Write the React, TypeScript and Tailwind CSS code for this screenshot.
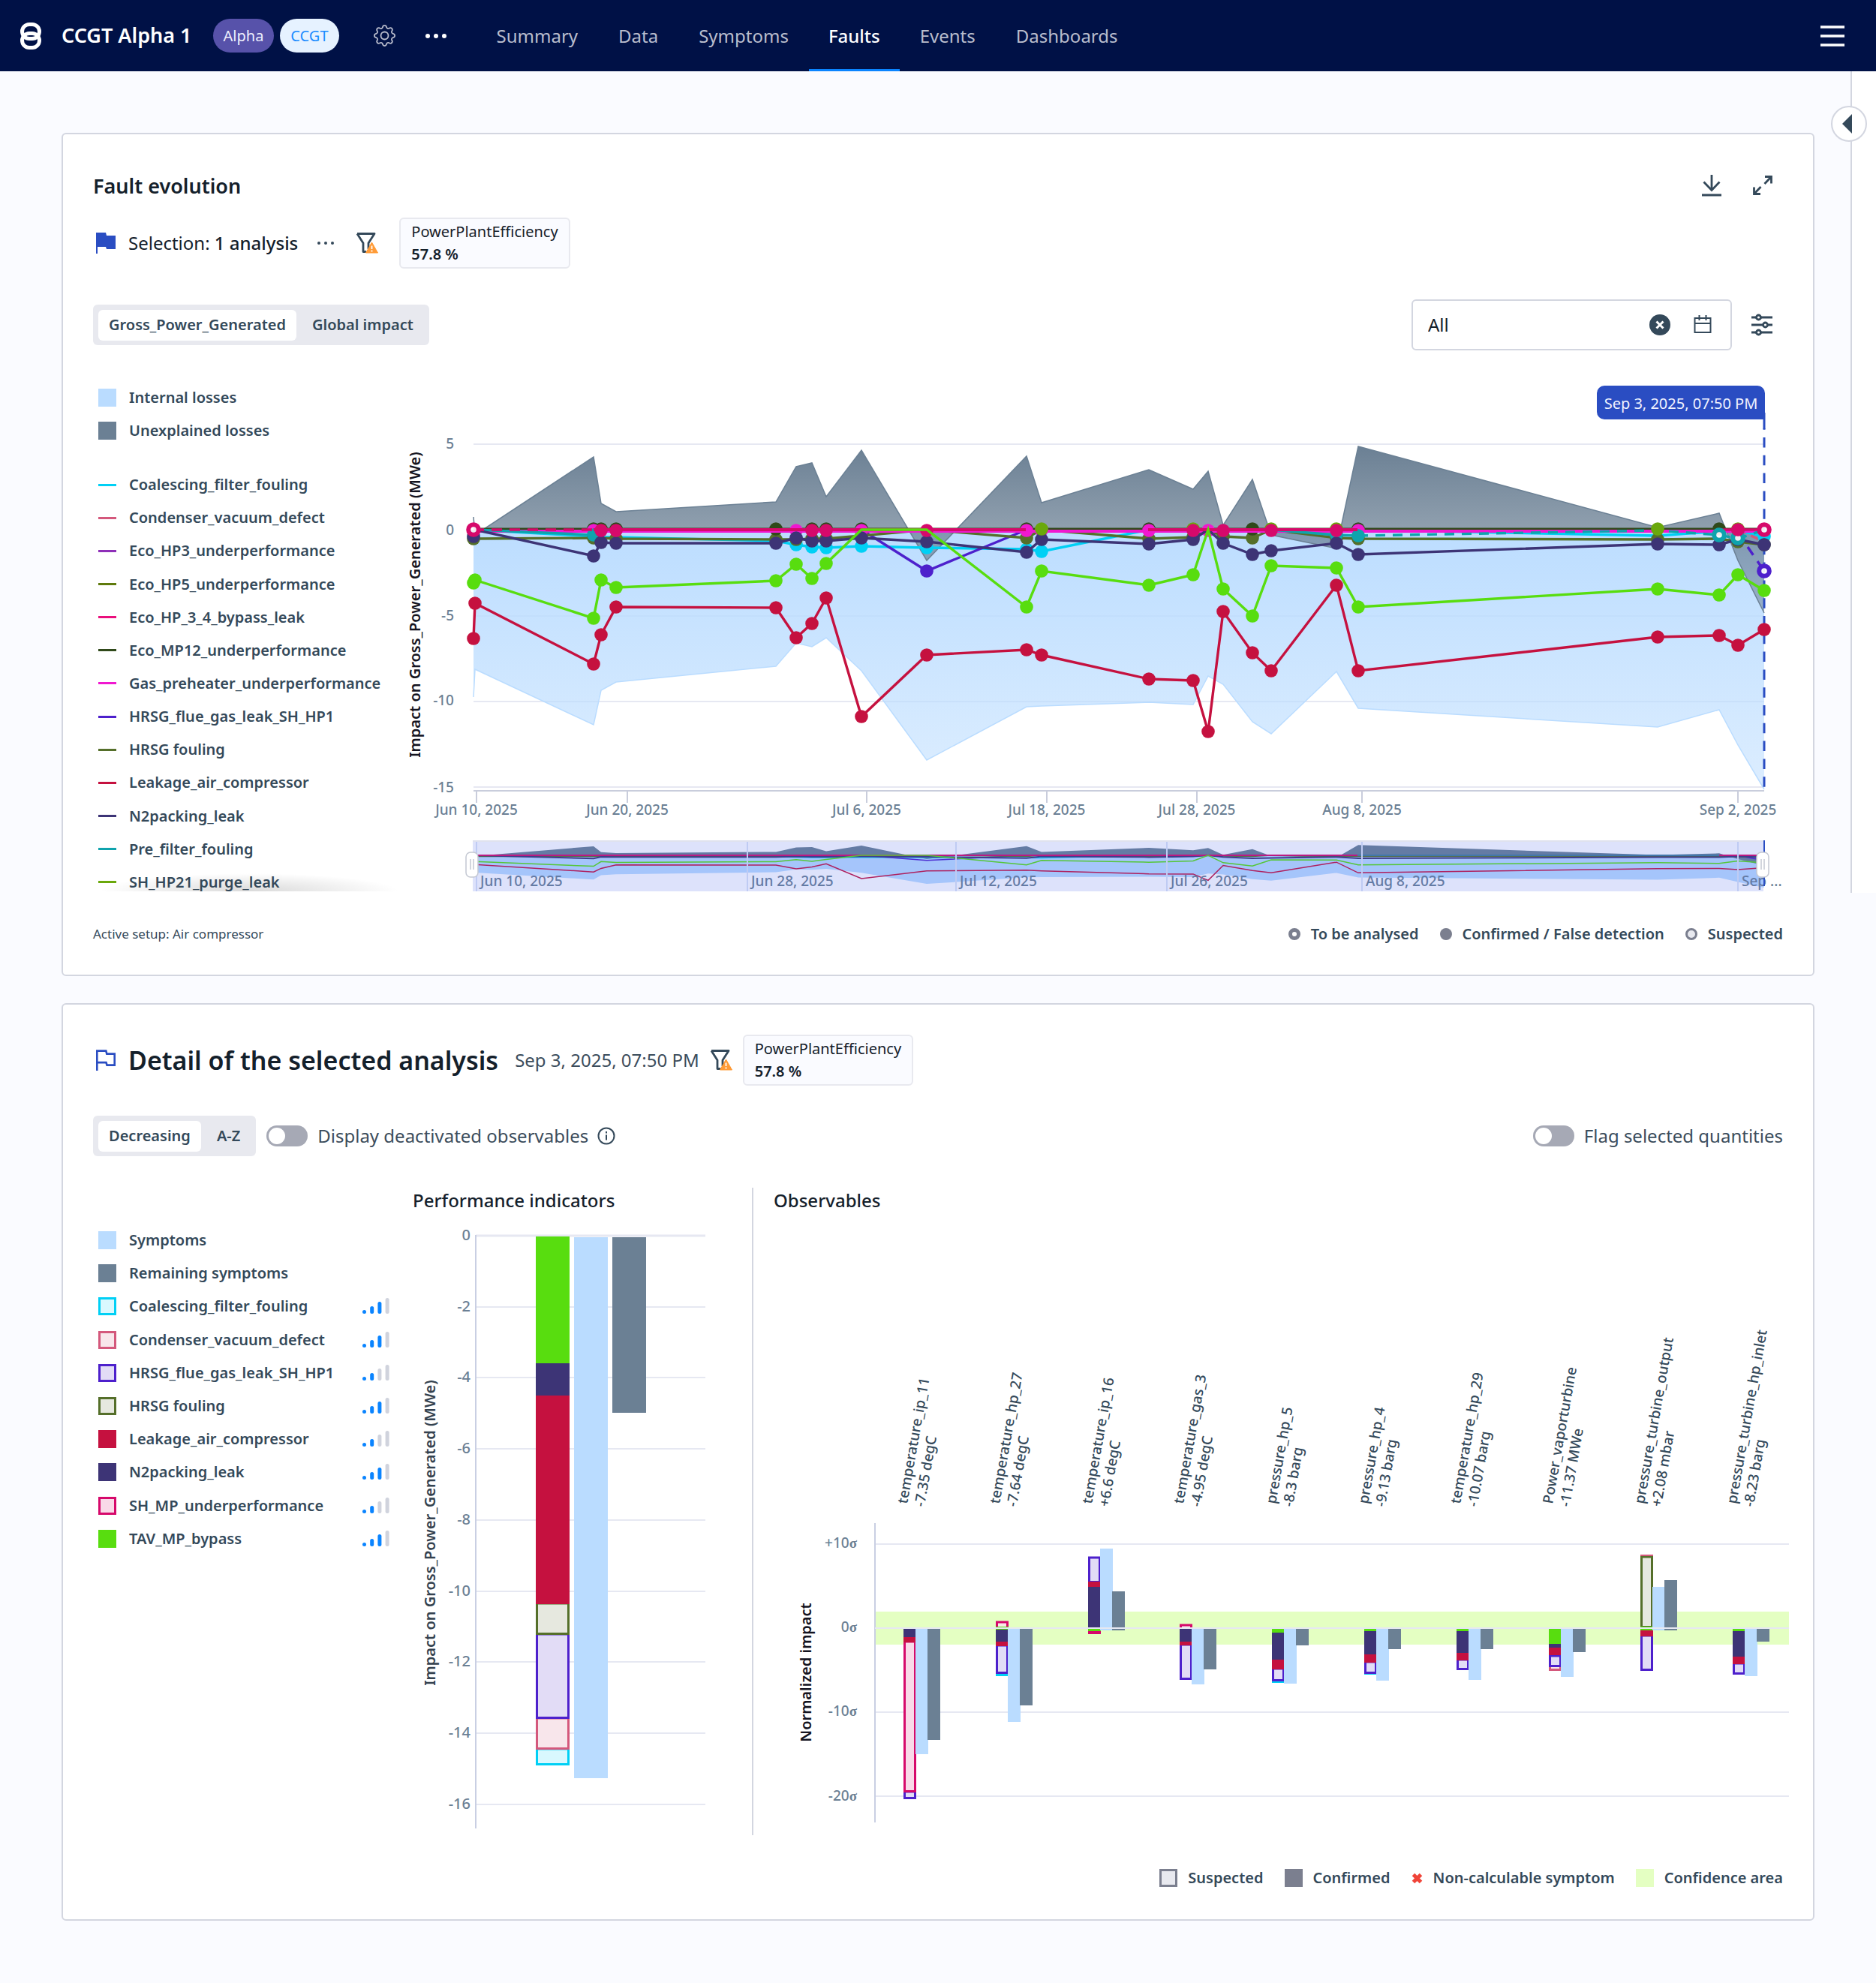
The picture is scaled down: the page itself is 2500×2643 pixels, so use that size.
import React from "react";
import { BsGear } from "react-icons/bs";

type Pt = [number, number];

/* ---------- shared colours ---------- */
const CYAN = "#00d0f5";
const PINK = "#d4587c";
const PURPLE = "#4d20cc";
const OLIVE = "#556f2a";
const RED = "#c5113f";
const NAVY = "#3d3476";
const TEAL = "#0fa3ad";
const CRIMSON = "#d6096b";
const GREEN = "#58dd0f";
const MAGENTA = "#f018d0";
const DARK = "#30491a";
const LIME = "#6aa80b";
const SKY = "#badcff";
const SLATE = "#6b8094";

/* ---------- icons ---------- */
function Logo() {
  return (
    <svg width="28" height="36" viewBox="0 0 28 36" fill="none" stroke="#fff" strokeWidth="5" aria-hidden="true">
      <rect x="2.5" y="2.5" width="23" height="19" rx="9.5" />
      <rect x="2.5" y="14.5" width="23" height="19" rx="9.5" />
    </svg>
  );
}

function Dots({ size, r, gap }: { size: number; r: number; gap: number }) {
  const c = size / 2;
  return (
    <svg width={size} height={size} viewBox={`0 0 ${size} ${size}`} fill="currentColor" aria-hidden="true">
      <circle cx={c - gap} cy={c} r={r} />
      <circle cx={c} cy={c} r={r} />
      <circle cx={c + gap} cy={c} r={r} />
    </svg>
  );
}

function FlagSolid() {
  return (
    <svg width="28" height="28" viewBox="0 0 28 28" fill="#2a4dc2" aria-hidden="true">
      <path d="M1 0h13l1 4h12v18H15l-1-3H3v9H1z" />
    </svg>
  );
}

function FlagOutline() {
  return (
    <svg width="28" height="28" viewBox="0 0 28 28" fill="none" stroke="#2a4dc2" strokeWidth="2.6" aria-hidden="true">
      <path d="M2.3 28V1.6h12l1 4h10.4v15H15.500l-1-3.500H2.300" />
    </svg>
  );
}

function FilterWarn() {
  return (
    <svg width="30" height="30" viewBox="0 0 30 30" fill="none" aria-hidden="true">
      <path d="M2 2.500h23l-8 12.500v8M2 2.500l8 12.500v11.500h4" stroke="#34495a" strokeWidth="2.800" strokeLinejoin="round" />
      <path d="M21.500 14l8 14h-16z" fill="#ff9b37" stroke="#ff9b37" strokeLinejoin="round" />
      <path d="M21.500 18.500v4.500M21.500 24.500v2" stroke="#fff" strokeWidth="1.800" />
    </svg>
  );
}

function DownloadIcon() {
  return (
    <svg width="30" height="30" viewBox="0 0 30 30" fill="none" stroke="#34495a" strokeWidth="2.800" aria-hidden="true">
      <path d="M15 0v20M4.500 9.500L15 20.500l10.500-11M2 27h26" />
    </svg>
  );
}

function ExpandIcon() {
  return (
    <svg width="30" height="30" viewBox="0 0 30 30" fill="none" stroke="#34495a" strokeWidth="2.800" aria-hidden="true">
      <path d="M18 2.500h8.500v9M26.500 2.500L17.500 12M12 25.500H3.500v-9M3.500 25.500L12.500 16" />
    </svg>
  );
}

function ClearIcon() {
  return (
    <svg width="28" height="28" viewBox="0 0 28 28" aria-hidden="true">
      <circle cx="14" cy="14" r="14" fill="#34495a" />
      <path d="M9.500 9.500l9 9M18.500 9.500l-9 9" stroke="#fff" strokeWidth="3" />
    </svg>
  );
}

function CalendarIcon() {
  return (
    <svg width="24" height="26" viewBox="0 0 24 26" fill="none" stroke="#34495a" strokeWidth="2" aria-hidden="true">
      <path d="M1.500 4h21v19h-21zM1.500 11h21M7.500 0v7M16.500 0v7" />
    </svg>
  );
}

function SlidersIcon() {
  return (
    <svg width="30" height="30" viewBox="0 0 30 30" fill="none" stroke="#34495a" strokeWidth="2.800" aria-hidden="true">
      <path d="M1 5h6M14 5h15M1 15h15M23 15h6M1 25h6M14 25h15" />
      <circle cx="10.500" cy="5" r="3" />
      <circle cx="19.500" cy="15" r="3" />
      <circle cx="10.500" cy="25" r="3" />
    </svg>
  );
}

function InfoIcon() {
  return (
    <svg width="24" height="24" viewBox="0 0 24 24" fill="none" stroke="#34495a" strokeWidth="2" aria-hidden="true">
      <circle cx="12" cy="12" r="10.500" />
      <path d="M12 10.500v7M12 6v2.500" />
    </svg>
  );
}

/* ---------- small building blocks ---------- */
function EfficiencyChip() {
  return (
    <div className="flex h-[68px] flex-col justify-center rounded-md border-2 border-[#e8e9ef] bg-[#fafbff] px-[14px] text-[20px] leading-[30px] text-[#14202b]">
      <span>PowerPlantEfficiency</span>
      <span className="font-semibold">57.8 %</span>
    </div>
  );
}

function Segmented({ options }: { options: string[] }) {
  const [active, setActive] = React.useState(0);
  return (
    <div className="flex h-[54px] items-center rounded-md bg-[#e8e9ef] px-[7px]">
      {options.map((o, i) => (
        <button
          key={o}
          type="button"
          aria-pressed={active === i}
          onClick={() => setActive(i)}
          className={
            active === i
              ? "h-[41px] rounded-md bg-white px-[14px] text-[20px] font-semibold text-[#34495a]"
              : "h-[41px] rounded-md px-[14px] ml-[7px] text-[20px] font-semibold text-[#34495a]"
          }
        >
          {o}
        </button>
      ))}
    </div>
  );
}

function Switch({ label }: { label: string }) {
  return (
    <label className="flex items-center gap-[13px] text-[24px] text-[#3c4d5c]">
      <input
        type="checkbox"
        role="switch"
        className="relative h-[28px] w-[55px] appearance-none rounded-full bg-[#a6a9b5] before:absolute before:left-[3px] before:top-[3px] before:size-[22px] before:rounded-full before:bg-white checked:bg-[#2a4dc2] checked:before:left-[30px]"
      />
      {label}
    </label>
  );
}

/* ---------- header ---------- */
const TABS = ["Summary", "Data", "Symptoms", "Faults", "Events", "Dashboards"];

function Header() {
  return (
    <header className="flex h-[95px] items-center bg-[#001146] text-white">
      <a href="#home" aria-label="Home" className="ml-[27px]">
        <Logo />
      </a>
      <h1 className="ml-[27px] text-[27px] font-semibold">CCGT Alpha 1</h1>
      <span className="ml-[28px] flex h-[45px] items-center rounded-full bg-[#5752aa] px-[14px] text-[20px] text-[#eeeefc]">Alpha</span>
      <span className="ml-2 flex h-[45px] items-center rounded-full bg-[#e6f2ff] px-[14px] text-[20px] text-[#1a8cff]">CCGT</span>
      <button type="button" aria-label="Settings" className="ml-[46px] text-[#b9bdcd]">
        <BsGear size={29} />
      </button>
      <button type="button" aria-label="More" className="ml-[39px]">
        <Dots size={30} r={3} gap={11} />
      </button>
      <nav className="ml-[39px] flex h-full">
        {TABS.map((t) => (
          <a
            key={t}
            href={"#" + t.toLowerCase()}
            className={
              t === "Faults"
                ? "flex h-full items-center border-b-[3px] border-[#0a84ff] px-[26px] pt-[3px] text-[24px] font-medium text-white"
                : "flex h-full items-center px-[27px] text-[24px] text-[#b9bdcd]"
            }
          >
            {t}
          </a>
        ))}
      </nav>
      <button type="button" aria-label="Menu" className="ml-auto mr-[42px]">
        <svg width="32" height="28" viewBox="0 0 32 28" stroke="#fff" strokeWidth="3.500" aria-hidden="true">
          <path d="M0 2h32M0 14h32M0 26h32" />
        </svg>
      </button>
    </header>
  );
}

/* ---------- fault evolution chart ---------- */
const XS = [631, 633, 791, 801, 821, 1034, 1061, 1082, 1101, 1148, 1235, 1368, 1388, 1531, 1590, 1610, 1630, 1669, 1694, 1781, 1810, 2209, 2291, 2316, 2351];
const Z = 706;
const GRAY_Y = [689, 713, 609, 671, 682, 669, 622, 617, 662, 600, 747, 608, 670, 626, 652, 628, 700, 639, 713, 731, 595, 703, 684, 747, 817];
const SKY_Y = [929, 892, 966, 920, 909, 888, 857, 862, 850, 894, 1013, 942, 941, 936, 939, 901, 912, 962, 978, 895, 944, 969, 946, 993, 1052];
const RED_Y = [851, 804, 885, 846, 809, 810, 850, 831, 797, 955, 873, 866, 873, 905, 907, 975, 815, 870, 894, 780, 894, 849, 847, 860, 839];
const GREEN_Y = [777, 773, 824, 773, 783, 774, 752, 771, 751, Z, Z, 809, 761, 780, 766, Z, 785, 821, 754, 757, 809, 785, 793, 766, 787];
const NAVY_Y = [715, 706, 741, 723, 724, 724, 717, 721, 721, 717, 722, 736, 719, 725, 719, Z, 724, 739, 734, 724, 739, 725, 726, 719, 726];
const OLIVE_Y = [718, 718, 717, 717, 718, 719, 719, 718, 718, 714, Z, 717, Z, 718, 716, Z, 715, 717, Z, 717, 718, 719, 718, 722, 726];
const CYAN_Y = [Z, Z, 715, 716, 716, 721, 726, 729, 730, 728, 730, 732, 735, Z, Z, Z, Z, Z, Z, Z, Z, 714, 708, 707, 715];
const TEAL_Y = [Z, Z, 713, Z, Z, Z, Z, Z, Z, Z, Z, Z, Z, Z, Z, Z, Z, Z, Z, 713, 714, 707, 713, 718, Z];
const PURPLE_Y = [Z, Z, Z, Z, Z, Z, Z, Z, Z, Z, 761, Z, Z, Z, Z, Z, Z, Z, Z, Z, Z, Z, Z, 710, 761];

const pts = (ys: number[], from = 0, to = 24) =>
  XS.slice(from, to + 1)
    .map((x, i) => `${x},${ys[from + i]}`)
    .join(" ");
const area = (ys: number[]) => `631,${Z} ${pts(ys)} 2351,${Z}`;
const dotsAt = (ys: number[], idx: number[]): Pt[] => idx.map((i) => [XS[i], ys[i]]);
const flat = (y: number) => XS.map(() => y);
const ALL = XS.map((_, i) => i);

function DotSet({ at, color }: { at: Pt[]; color: string }) {
  return (
    <g fill={color}>
      {at.map(([x, y], i) => (
        <circle key={i} cx={x} cy={y} r="8.800" />
      ))}
    </g>
  );
}

function RingDot({ x, y, color }: { x: number; y: number; color: string }) {
  return <circle cx={x} cy={y} r="6.800" fill="#fff" fillOpacity="0.9" stroke={color} strokeWidth="6" />;
}

const X_TICKS: [number, string][] = [
  [635, "Jun 10, 2025"],
  [836, "Jun 20, 2025"],
  [1155, "Jul 6, 2025"],
  [1395, "Jul 18, 2025"],
  [1595, "Jul 28, 2025"],
  [1815, "Aug 8, 2025"],
  [2316, "Sep 2, 2025"],
];
const MINI_TICKS: [number, string][] = [
  [635, "Jun 10, 2025"],
  [996, "Jun 28, 2025"],
  [1274, "Jul 12, 2025"],
  [1555, "Jul 26, 2025"],
  [1815, "Aug 8, 2025"],
  [2316, "Sep ..."],
];

function EvolutionChart() {
  const mini = (ys: number[]) => XS.map((x, i) => `${x},${(1140 + (ys[i] - Z) * 0.124).toFixed(1)}`).join(" ");
  return (
    <svg viewBox="540 500 1836 690" className="block h-auto w-full" role="img" aria-label="Fault evolution chart">
      <defs>
        <linearGradient id="gSky" gradientUnits="userSpaceOnUse" x1="0" y1="706" x2="0" y2="1052">
          <stop offset="0" stopColor="#badcff" stopOpacity="0.97" />
          <stop offset="1" stopColor="#badcff" stopOpacity="0.5" />
        </linearGradient>
        <linearGradient id="gGray" gradientUnits="userSpaceOnUse" x1="0" y1="595" x2="0" y2="817">
          <stop offset="0" stopColor="#6b8094" />
          <stop offset="1" stopColor="#6b8094" stopOpacity="0.5" />
        </linearGradient>
      </defs>

      <g stroke="#e6e8f2" strokeWidth="2">
        {[592, 706, 821, 935, 1049].map((y) => (
          <line key={y} x1="631" x2="2351" y1={y} y2={y} />
        ))}
      </g>
      <g className="text-[19px] font-medium" fill={SLATE} textAnchor="end">
        {[
          [598, "5"],
          [713, "0"],
          [827, "-5"],
          [940, "-10"],
          [1056, "-15"],
        ].map(([y, t]) => (
          <text key={t} x="605" y={y}>{t}</text>
        ))}
      </g>
      <text className="text-[20px] font-semibold" fill="#14141f" textAnchor="middle" transform="translate(560 806) rotate(-90)">
        Impact on Gross_Power_Generated (MWe)
      </text>

      <polygon points={area(SKY_Y)} fill="url(#gSky)" />
      <polyline points={pts(SKY_Y)} fill="none" stroke={SKY} strokeWidth="1.500" />
      <polygon points={area(GRAY_Y)} fill="url(#gGray)" />
      <polyline points={pts(GRAY_Y)} fill="none" stroke={SLATE} strokeWidth="1.500" />

      <g stroke="#c9cddc" strokeWidth="2">
        <line x1="631" x2="2351" y1="1054" y2="1054" />
        {X_TICKS.map(([x]) => (
          <line key={x} x1={x} x2={x} y1="1054" y2="1070" />
        ))}
      </g>
      <g className="text-[19px] font-medium" fill={SLATE} textAnchor="middle">
        {X_TICKS.map(([x, t]) => (
          <text key={x} x={x} y="1086">{t}</text>
        ))}
      </g>

      <g>
        <line x1="2351" x2="2351" y1="571" y2="1054" stroke="#2a4dc2" strokeWidth="3" strokeDasharray="13.500 10.300" strokeDashoffset="-12" />
        <line x1="2351" x2="2351" y1="550" y2="572" stroke="#2a4dc2" strokeWidth="3" />
        <path d="M2138 514h204a10 10 0 0 1 10 10v35h-214a10 10 0 0 1-10-10v-25a10 10 0 0 1 10-10z" fill="#2a4dc2" />
        <text className="text-[20px]" fill="#f0f3ff" textAnchor="middle" x="2240" y="545">Sep 3, 2025, 07:50 PM</text>
      </g>

      <g fill="none" strokeWidth="3.400">
        <polyline points={pts(CYAN_Y)} stroke={CYAN} />
        <polyline points={pts(PURPLE_Y, 9, 11)} stroke={PURPLE} />
        <polyline points={pts(PURPLE_Y, 23)} stroke={PURPLE} strokeDasharray="13 10" />
        <line x1="2316" y1="706" x2="2351" y2="722" stroke={PINK} strokeDasharray="11 8" />
      </g>
      <DotSet at={dotsAt(CYAN_Y, [6, 7, 8, 9, 10, 11, 12, 24])} color={CYAN} />
      <DotSet at={dotsAt(PURPLE_Y, [10])} color={PURPLE} />
      <polyline points={pts(OLIVE_Y)} fill="none" stroke={OLIVE} strokeWidth="3.400" />
      <DotSet at={dotsAt(OLIVE_Y, [0, 2, 4, 5, 6, 7, 8, 9, 11, 13, 14, 16, 17, 19, 20, 21, 23, 24])} color={OLIVE} />

      <line x1="631" x2="2351" y1="705" y2="705" stroke={DARK} strokeWidth="3" />
      <DotSet at={dotsAt(flat(705), [2, 3, 4, 5, 7, 8, 9, 11, 13, 17, 20, 22])} color={DARK} />
      <DotSet at={dotsAt(flat(705), [14, 18, 19, 23])} color={LIME} />
      <line x1="631" x2="2351" y1="708" y2="708" stroke={MAGENTA} strokeWidth="4" />
      <DotSet at={dotsAt(flat(707), [2, 6, 9, 11, 12, 13, 15, 20])} color={MAGENTA} />
      <polyline points={pts(TEAL_Y, 1, 2)} fill="none" stroke={TEAL} strokeWidth="3.400" />
      <polyline points={pts(TEAL_Y, 18, 20)} fill="none" stroke={TEAL} strokeWidth="3.400" />
      <polyline points={pts(TEAL_Y, 20)} fill="none" stroke={TEAL} strokeWidth="3.400" strokeDasharray="13 10" />
      <DotSet at={dotsAt(TEAL_Y, [2, 19, 20])} color={TEAL} />

      <polyline points={pts(NAVY_Y)} fill="none" stroke={NAVY} strokeWidth="3.400" />
      <DotSet at={dotsAt(NAVY_Y, ALL.filter((i) => i !== 1 && i !== 15))} color={NAVY} />
      <line x1="631" x2="791" y1="706" y2="706" stroke={CRIMSON} strokeWidth="3.400" strokeDasharray="14 10" />
      <line x1="791" x2="1367" y1="706" y2="706" stroke={CRIMSON} strokeWidth="4" />
      <line x1="1530" x2="1809" y1="706" y2="706" stroke={CRIMSON} strokeWidth="4" />
      <line x1="2291" x2="2351" y1="706" y2="706" stroke={CRIMSON} strokeWidth="3.400" />
      <DotSet at={dotsAt(flat(707), [3, 4, 7, 8, 10, 14, 16, 18, 19, 23])} color={CRIMSON} />
      <DotSet at={dotsAt(flat(705), [12, 21])} color={LIME} />

      <polyline points={pts(GREEN_Y)} fill="none" stroke={GREEN} strokeWidth="3.400" />
      <DotSet at={dotsAt(GREEN_Y, ALL.filter((i) => i !== 9 && i !== 10 && i !== 15))} color={GREEN} />
      <polyline points={pts(RED_Y)} fill="none" stroke={RED} strokeWidth="3.400" />
      <DotSet at={dotsAt(RED_Y, ALL)} color={RED} />
      <RingDot x={631} y={706} color={CRIMSON} />
      <RingDot x={2291} y={713} color={TEAL} />
      <RingDot x={2316} y={717} color={TEAL} />
      <DotSet at={[[2316, 706]]} color={CRIMSON} />
      <RingDot x={2351} y={706} color={CRIMSON} />
      <RingDot x={2351} y={761} color={PURPLE} />

      {/* range overview */}
      <g>
        <g fill="none" strokeWidth="1.500">
          <polygon points={`631,1140 ${mini(SKY_Y)} 2351,1140`} fill={SKY} />
          <polygon points={`631,1140 ${mini(GRAY_Y)} 2351,1140`} fill={SLATE} />
          <polyline points={mini(CYAN_Y)} stroke={CYAN} />
          <polyline points={mini(PURPLE_Y)} stroke={PURPLE} />
          <polyline points={mini(OLIVE_Y)} stroke={OLIVE} />
          <polyline points={mini(NAVY_Y)} stroke={NAVY} strokeWidth="2" />
          <polyline points={mini(flat(Z))} stroke={CRIMSON} strokeWidth="2" />
          <line x1="1809" x2="2291" y1="1140" y2="1140" stroke={TEAL} />
          <polyline points={mini(GREEN_Y)} stroke={GREEN} />
          <polyline points={mini(RED_Y)} stroke={RED} />
        </g>
        <g className="text-[19px] font-medium" fill={SLATE}>
          {MINI_TICKS.map(([x, t]) => (
            <React.Fragment key={x}>
              <line x1={x} x2={x} y1="1121" y2="1188" stroke="#dbe3f6" strokeWidth="2" />
              <text x={x + 5} y="1181">{t}</text>
            </React.Fragment>
          ))}
        </g>
        <rect x="630" y="1121" width="1720" height="67" fill="#4a66e8" fillOpacity="0.19" />
        <line x1="630" x2="2350" y1="1121" y2="1121" stroke="#dfe2ee" strokeWidth="2" />
        <line x1="2351" x2="2351" y1="1120" y2="1181" stroke="#2a4dc2" strokeWidth="2" />
        {[621, 2341].map((x) => (
          <g key={x} stroke="#c4c8d2">
            <rect x={x} y="1136" width="16" height="33" rx="6" fill="#fff" strokeWidth="1.500" />
            <path d={`M${x + 6} 1145v14M${x + 10} 1145v14`} strokeWidth="1.500" />
          </g>
        ))}
      </g>
    </svg>
  );
}

const AREA_KEYS: [string, string][] = [
  ["Internal losses", "bg-[#badcff]"],
  ["Unexplained losses", "bg-[#6b8094]"],
];
const LINE_KEYS: [string, string][] = [
  ["Coalescing_filter_fouling", "bg-[#00d0f5]"],
  ["Condenser_vacuum_defect", "bg-[#d4587c]"],
  ["Eco_HP3_underperformance", "bg-[#8e2fb8]"],
  ["Eco_HP5_underperformance", "bg-[#5f7a0c]"],
  ["Eco_HP_3_4_bypass_leak", "bg-[#ea0f7c]"],
  ["Eco_MP12_underperformance", "bg-[#30491a]"],
  ["Gas_preheater_underperformance", "bg-[#f018d0]"],
  ["HRSG_flue_gas_leak_SH_HP1", "bg-[#4d20cc]"],
  ["HRSG fouling", "bg-[#556f2a]"],
  ["Leakage_air_compressor", "bg-[#c5113f]"],
  ["N2packing_leak", "bg-[#3d3476]"],
  ["Pre_filter_fouling", "bg-[#0fa3ad]"],
  ["SH_HP21_purge_leak", "bg-[#6aa80b]"],
];

function EvolutionLegend() {
  return (
    <div className="h-[688px] w-[416px] shrink-0 overflow-hidden bg-[radial-gradient(ellipse_200px_24px_at_50%_100%,rgba(0,0,0,0.15),transparent)] pl-[7px] text-[20px] font-semibold text-[#34495a]">
      <ul className="pt-2">
        {AREA_KEYS.map(([name, bg]) => (
          <li key={name} className="flex h-[44px] items-center gap-[17px]">
            <span className={"size-6 " + bg} />
            {name}
          </li>
        ))}
      </ul>
      <ul className="mt-[28px] grid h-[574px] auto-rows-fr">
        {LINE_KEYS.map(([name, bg]) => (
          <li key={name} className="flex items-center gap-[17px]">
            <span className={"h-[3px] w-6 " + bg} />
            {name}
          </li>
        ))}
      </ul>
    </div>
  );
}

function EvolutionCard() {
  return (
    <section className="rounded-md border-2 border-[#d3d6e0] bg-white px-10 pb-[34px] pt-[34px]">
      <div className="flex h-[70px] items-center">
        <h2 className="text-[27px] font-semibold text-[#14202b]">Fault evolution</h2>
        <button type="button" aria-label="Download" className="ml-auto">
          <DownloadIcon />
        </button>
        <button type="button" aria-label="Expand" className="ml-[38px] mr-3">
          <ExpandIcon />
        </button>
      </div>

      <div className="mt-[7px] flex items-center">
        <span className="ml-[3px]">
          <FlagSolid />
        </span>
        <p className="ml-4 text-[24px] text-[#14202b]">
          Selection: <span className="font-medium">1 analysis</span>
        </p>
        <button type="button" aria-label="More" className="ml-[23px] text-[#34495a]">
          <Dots size={28} r={2} gap={9} />
        </button>
        <button type="button" aria-label="Filter warning" className="ml-[26px] mr-[28px]">
          <FilterWarn />
        </button>
        <EfficiencyChip />
      </div>

      <div className="mt-[41px] flex items-center">
        <Segmented options={["Gross_Power_Generated", "Global impact"]} />
        <div className="ml-auto flex h-[68px] w-[427px] items-center rounded-md border-2 border-[#d3d6e0] pl-5">
          <input aria-label="Period" defaultValue="All" className="w-0 flex-1 bg-transparent text-[24px] text-[#14202b] outline-none" />
          <button type="button" aria-label="Clear">
            <ClearIcon />
          </button>
          <button type="button" aria-label="Open calendar" className="ml-[31px] mr-[25px]">
            <CalendarIcon />
          </button>
        </div>
        <button type="button" aria-label="Options" className="ml-[25px] mr-[13px]">
          <SlidersIcon />
        </button>
      </div>

      <div className="mt-[33px] flex">
        <EvolutionLegend />
        <div className="min-w-0 flex-1">
          <EvolutionChart />
        </div>
      </div>

      <footer className="mt-[35px] flex h-10 items-center text-[20px] font-semibold text-[#34495a]">
        <p className="mr-auto text-[17px] font-normal">Active setup: Air compressor</p>
        <ul className="flex items-center gap-[28px]">
          <li className="flex items-center gap-[14px]">
            <span className="size-4 rounded-full border-[5px] border-[#7b7f8f] bg-white" />
            To be analysed
          </li>
          <li className="flex items-center gap-[14px]">
            <span className="size-4 rounded-full bg-[#7b7f8f]" />
            Confirmed / False detection
          </li>
          <li className="flex items-center gap-[14px]">
            <span className="size-4 rounded-full border-[3px] border-[#7b7f8f] bg-[#e8e9ef]" />
            Suspected
          </li>
        </ul>
      </footer>
    </section>
  );
}

/* ---------- detail card ---------- */
const DETAIL_KEYS: [string, string, number][] = [
  ["Symptoms", "bg-[#badcff]", 0],
  ["Remaining symptoms", "bg-[#6b8094]", 0],
  ["Coalescing_filter_fouling", "border-[3px] border-[#00d0f5] bg-[#d9f8fe]", 3],
  ["Condenser_vacuum_defect", "border-[3px] border-[#d4587c] bg-[#f8e6eb]", 3],
  ["HRSG_flue_gas_leak_SH_HP1", "border-[3px] border-[#4d20cc] bg-[#e2dcf6]", 2],
  ["HRSG fouling", "border-[3px] border-[#556f2a] bg-[#e6e8df]", 3],
  ["Leakage_air_compressor", "bg-[#c5113f]", 2],
  ["N2packing_leak", "bg-[#3d3476]", 3],
  ["SH_MP_underperformance", "border-[3px] border-[#d6096b] bg-[#f9d9e8]", 2],
  ["TAV_MP_bypass", "bg-[#58dd0f]", 3],
];

function Signal({ level }: { level: number }) {
  return (
    <svg width="36" height="22" viewBox="0 0 36 22" role="img" aria-label={`Confidence ${level} of 4`}>
      {[5, 10, 16, 21].map((h, i) => (
        <rect key={i} x={i * 10.200} y={21 - h} width="5" height={h} rx="2.500" fill={i < level ? "#0a84ff" : "#d0d3dd"} />
      ))}
    </svg>
  );
}

function DetailLegend() {
  return (
    <ul className="mt-[48px] grid h-[442px] w-[406px] shrink-0 auto-rows-fr pl-[7px] text-[20px] font-semibold text-[#34495a]">
      {DETAIL_KEYS.map(([name, cls, level]) => (
        <li key={name} className="flex w-[388px] items-center gap-[17px]">
          <span className={"size-6 " + cls} />
          <span className="flex-1">{name}</span>
          {level > 0 && <Signal level={level} />}
        </li>
      ))}
    </ul>
  );
}

type Seg = { c: string; a: number; b: number; hollow?: string };

function Stack({ x, w, segs }: { x: number; w: number; segs: Seg[] }) {
  return (
    <g>
      {segs.map((s, i) => {
        const h = s.b - s.a;
        if (!s.hollow || h < 5) return <rect key={i} x={x} y={s.a} width={w} height={h} fill={s.c} />;
        return (
          <rect key={i} x={x + 1.5} y={s.a - 1} width={w - 3} height={h - 0.5} fill={s.hollow} stroke={s.c} strokeWidth="3" />
        );
      })}
    </g>
  );
}

const PERF: Seg[] = [
  { c: CYAN, a: 2332, b: 2353, hollow: "#d9f8fe" },
  { c: PINK, a: 2291, b: 2332, hollow: "#f8e6eb" },
  { c: PURPLE, a: 2179, b: 2291, hollow: "#e2dcf6" },
  { c: OLIVE, a: 2138, b: 2179, hollow: "#e6e8df" },
  { c: RED, a: 1860, b: 2138 },
  { c: NAVY, a: 1817, b: 1860 },
  { c: GREEN, a: 1648, b: 1817 },
];

function PerformanceChart() {
  return (
    <svg viewBox="530 1617 472 829" className="block h-auto w-full" role="img" aria-label="Performance indicators chart">
      <g stroke="#e6e8f2" strokeWidth="2">
        {[2, 4, 6, 8, 10, 12, 14, 16].map((v) => (
          <line key={v} x1="634" x2="940" y1={Math.round(1647 + v * 47.35)} y2={Math.round(1647 + v * 47.35)} />
        ))}
        <line x1="634" x2="940" y1="1647" y2="1647" strokeWidth="3" />
        <line x1="634" x2="634" y1="1646" y2="2437" stroke="#c9cfe3" />
      </g>
      <g className="text-[20px] font-medium" fill={SLATE} textAnchor="end">
        {[0, 2, 4, 6, 8, 10, 12, 14, 16].map((v) => (
          <text key={v} x="627" y={Math.round(1653 + v * 47.35)}>{v ? "-" + v : "0"}</text>
        ))}
      </g>
      <text className="text-[20px] font-semibold" fill="#34424f" textAnchor="middle" transform="translate(580 2043) rotate(-90)">
        Impact on Gross_Power_Generated (MWe)
      </text>
      <Stack x={714} w={45} segs={PERF} />
      <rect x="765" y="1649" width="45" height="721" fill={SKY} />
      <rect x="816" y="1649" width="45" height="234" fill={SLATE} />
    </svg>
  );
}

const HP = "#e2dcf6";
type Col = { name: string; val: string; segs: Seg[]; sky: Pt; gray: Pt };
const O = 2170;
const COLS: Col[] = [
  { name: "temperature_ip_11", val: "-7.35 degC", segs: [{ c: PURPLE, a: 2389, b: 2398, hollow: HP }, { c: CRIMSON, a: 2189, b: 2389, hollow: "#f9d9e8" }, { c: NAVY, a: O, b: 2182 }, { c: RED, a: 2182, b: 2189 }], sky: [O, 2338], gray: [O, 2319] },
  { name: "temperature_hp_27", val: "-7.64 degC", segs: [{ c: CYAN, a: 2231, b: 2234 }, { c: PURPLE, a: 2194, b: 2231, hollow: HP }, { c: CRIMSON, a: 2163, b: 2173, hollow: "#f9e9e8" }, { c: GREEN, a: 2168, b: 2172 }, { c: NAVY, a: 2172, b: 2188 }, { c: RED, a: 2188, b: 2194 }], sky: [O, 2295], gray: [O, 2273] },
  { name: "temperature_ip_16", val: "+6.6 degC", segs: [{ c: PURPLE, a: 2077, b: 2110, hollow: HP }, { c: RED, a: 2108, b: 2115 }, { c: NAVY, a: 2115, b: O }, { c: GREEN, a: O, b: 2174 }, { c: CRIMSON, a: 2174, b: 2178 }], sky: [2064, 2173], gray: [2121, 2173] },
  { name: "temperature_gas_3", val: "-4.95 degC", segs: [{ c: CRIMSON, a: 2167, b: 2175, hollow: "#f9e9e8" }, { c: PURPLE, a: 2193, b: 2239, hollow: HP }, { c: NAVY, a: O, b: 2188 }, { c: RED, a: 2188, b: 2193 }], sky: [O, 2245], gray: [O, 2225] },
  { name: "pressure_hp_5", val: "-8.3 barg", segs: [{ c: CYAN, a: 2241, b: 2243 }, { c: PURPLE, a: 2225, b: 2241, hollow: HP }, { c: GREEN, a: O, b: 2176 }, { c: NAVY, a: 2176, b: 2212 }, { c: RED, a: 2212, b: 2225 }], sky: [O, 2244], gray: [O, 2193] },
  { name: "pressure_hp_4", val: "-9.13 barg", segs: [{ c: CYAN, a: 2230, b: 2232 }, { c: PURPLE, a: 2216, b: 2231, hollow: HP }, { c: GREEN, a: O, b: 2174 }, { c: NAVY, a: 2174, b: 2205 }, { c: RED, a: 2205, b: 2216 }], sky: [O, 2240], gray: [O, 2198] },
  { name: "temperature_hp_29", val: "-10.07 barg", segs: [{ c: PURPLE, a: 2213, b: 2226, hollow: HP }, { c: GREEN, a: O, b: 2174 }, { c: NAVY, a: 2174, b: 2203 }, { c: RED, a: 2203, b: 2213 }], sky: [O, 2239], gray: [O, 2198] },
  { name: "Power_vaporturbine", val: "-11.37 MWe", segs: [{ c: PINK, a: 2220, b: 2227, hollow: "#f8e6eb" }, { c: PURPLE, a: 2208, b: 2222, hollow: HP }, { c: GREEN, a: O, b: 2191 }, { c: NAVY, a: 2191, b: 2196 }, { c: RED, a: 2196, b: 2206 }], sky: [O, 2235], gray: [O, 2202] },
  { name: "pressure_turbine_output", val: "+2.08 mbar", segs: [{ c: PURPLE, a: 2181, b: 2227, hollow: HP }, { c: OLIVE, a: 2076, b: 2170, hollow: "#e6e8df" }, { c: PINK, a: 2072, b: 2074 }, { c: GREEN, a: 2168, b: 2173 }, { c: RED, a: 2173, b: 2181 }], sky: [2115, 2173], gray: [2106, 2173] },
  { name: "pressure_turbine_hp_inlet", val: "-8.23 barg", segs: [{ c: PURPLE, a: 2218, b: 2232, hollow: HP }, { c: GREEN, a: O, b: 2174 }, { c: NAVY, a: 2174, b: 2208 }, { c: RED, a: 2208, b: 2218 }], sky: [O, 2234], gray: [O, 2188] },
];

function ObservablesChart() {
  return (
    <svg viewBox="1004 1617 1372 829" className="block h-auto w-full overflow-visible" role="img" aria-label="Observables chart">
      <rect x="1166" y="2148" width="1218" height="44" fill="#e4ffc2" />
      <g stroke="#e6e8f2" strokeWidth="2">
        {[2058, 2282, 2394].map((y) => (
          <line key={y} x1="1166" x2="2384" y1={y} y2={y} />
        ))}
      </g>
      <line x1="1166" x2="1166" y1="2030" y2="2429" stroke="#c9cfe3" strokeWidth="2" />
      <g className="text-[19px] font-medium" fill={SLATE} textAnchor="end">
        {([[2063, "+10"], [2175, "0"], [2287, "-10"], [2400, "-20"]] as [number, string][]).map(([y, t]) => (
          <text key={t} x="1142" y={y}>
            {t}
            <tspan className="font-['Liberation_Serif'] font-bold">σ</tspan>
          </text>
        ))}
      </g>
      <text className="text-[20px] font-semibold" fill="#14141f" textAnchor="middle" transform="translate(1081 2229) rotate(-90)">
        Normalized impact
      </text>
      {COLS.map((c, i) => {
        const x = Math.round(1204 + i * 122.8);
        return (
          <g key={c.name}>
            <Stack x={x} w={17} segs={c.segs} />
            <rect x={x + 16} y={c.sky[0]} width="17" height={c.sky[1] - c.sky[0]} fill={SKY} />
            <rect x={x + 32} y={c.gray[0]} width="17" height={c.gray[1] - c.gray[0]} fill={SLATE} />
            <g className="text-[19px] font-medium" fill="#34495a" transform={`translate(${x + 5} 2005) rotate(-80)`}>
              <text x="0" y="0">{c.name}</text>
              <text x="0" y="23">{c.val}</text>
            </g>
          </g>
        );
      })}
      <line x1="1166" x2="2384" y1="2170" y2="2170" stroke="#e6e8f2" strokeWidth="2" />
    </svg>
  );
}

function DetailCard() {
  return (
    <section className="mt-9 rounded-md border-2 border-[#d3d6e0] bg-white px-10 pb-[35px] pt-10">
      <div className="flex items-center">
        <span className="ml-[3px]">
          <FlagOutline />
        </span>
        <h2 className="ml-4 text-[34px] font-semibold text-[#14202b]">Detail of the selected analysis</h2>
        <time className="ml-[22px] text-[24px] text-[#3c4d5c]">Sep 3, 2025, 07:50 PM</time>
        <button type="button" aria-label="Filter warning" className="ml-[14px] mr-[14px]">
          <FilterWarn />
        </button>
        <EfficiencyChip />
      </div>

      <div className="mt-10 flex items-center">
        <Segmented options={["Decreasing", "A-Z"]} />
        <div className="ml-[14px]">
          <Switch label="Display deactivated observables" />
        </div>
        <button type="button" aria-label="Information" className="ml-[12px]">
          <InfoIcon />
        </button>
        <div className="ml-auto">
          <Switch label="Flag selected quantities" />
        </div>
      </div>

      <div className="mt-[42px] flex">
        <DetailLegend />
        <div className="w-[472px] shrink-0">
          <h3 className="ml-5 h-[34px] text-[24px] leading-[34px] font-medium text-[#14202b]">Performance indicators</h3>
          <PerformanceChart />
        </div>
        <div className="min-w-0 flex-1 border-l-2 border-[#d3d6e0]">
          <h3 className="ml-[27px] h-[34px] text-[24px] leading-[34px] font-medium text-[#14202b]">Observables</h3>
          <ObservablesChart />
        </div>
      </div>

      <ul className="mt-[37px] flex h-10 items-center justify-end gap-[28px] text-[20px] font-semibold text-[#34495a]">
        <li className="flex items-center gap-[14px]">
          <span className="size-6 border-[3px] border-[#7b7f8f] bg-[#e8e9ef]" />
          Suspected
        </li>
        <li className="flex items-center gap-[14px]">
          <span className="size-6 bg-[#7b7f8f]" />
          Confirmed
        </li>
        <li className="flex items-center gap-[14px]">
          <svg width="15" height="15" viewBox="0 0 15 15" stroke="#f04438" strokeWidth="5" aria-hidden="true">
            <path d="M2.500 2.500l10 10M12.500 2.500l-10 10" />
          </svg>
          Non-calculable symptom
        </li>
        <li className="flex items-center gap-[14px]">
          <span className="size-6 bg-[#e4ffc2]" />
          Confidence area
        </li>
      </ul>
    </section>
  );
}

export default function App() {
  return (
    <div className="relative min-h-screen bg-[#fafbff] font-['Noto_Sans',sans-serif]">
      <Header />
      <aside className="absolute right-0 top-[95px] h-[1095px] w-[34px] border-l-2 border-[#d3d6e0] bg-white">
        <button
          type="button"
          aria-label="Open side panel"
          className="absolute left-[-28px] top-[46px] flex size-12 items-center justify-center rounded-full border-2 border-[#d3d6e0] bg-white"
        >
          <svg width="18" height="26" viewBox="0 0 18 26" fill="#34495a" aria-hidden="true">
            <path d="M13 0v26L0 13z" />
          </svg>
        </button>
      </aside>
      <main className="px-[82px] pb-[82px] pt-[82px]">
        <EvolutionCard />
        <DetailCard />
      </main>
    </div>
  );
}
